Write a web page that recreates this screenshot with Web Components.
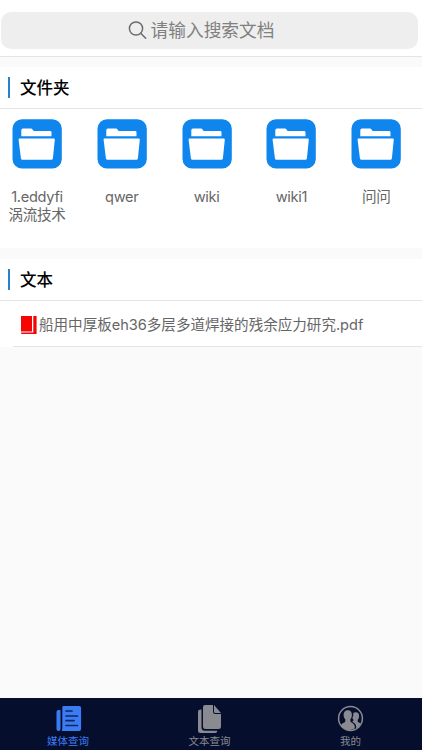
<!DOCTYPE html>
<html lang="zh-CN">
<head>
<meta charset="utf-8">
<meta name="viewport" content="width=device-width, initial-scale=1">
<title>媒体查询</title>
<style>
	html, body {
		height: 100%;
		margin: 0;
	}
	body {
		display: flex;
		flex-direction: column;
		background: #fafafa;
		color: #666;
		font-family: Inter, "Noto Sans CJK SC", sans-serif;
		overflow: hidden;
	}
	main {
		flex: 1;
		display: flex;
		flex-direction: column;
		gap: 11px;
	}
</style>
</head>
<body>
<search-bar placeholder="请输入搜索文档"></search-bar>
<main>
	<list-section heading="文件夹">
		<folder-grid>
			<folder-item>1.eddyfi<br>涡流技术</folder-item>
			<folder-item>qwer</folder-item>
			<folder-item>wiki</folder-item>
			<folder-item>wiki1</folder-item>
			<folder-item>问问</folder-item>
		</folder-grid>
	</list-section>
	<list-section heading="文本">
		<file-row>船用中厚板eh36多层多道焊接的残余应力研究.pdf</file-row>
	</list-section>
</main>
<tab-bar>
	<tab-item icon="media" active>媒体查询</tab-item>
	<tab-item icon="text">文本查询</tab-item>
	<tab-item icon="mine">我的</tab-item>
</tab-bar>

<script>
class SearchBar extends HTMLElement {
	constructor () {
		super();
		this.attachShadow({ mode: "open" });
		this.shadowRoot.innerHTML = `
			<style>
				:host {
					display: block;
					box-sizing: border-box;
					height: 57px;
					padding: 12px 4px 0 1px;
					background: white;
					border-bottom: 1px solid #e4e4e4;
				}
				#box {
					display: flex;
					align-items: center;
					justify-content: center;
					gap: 4px;
					height: 37px;
					padding-right: 17px;
					box-sizing: border-box;
					border-radius: 10px;
					background: #eee;
					color: #808080;
					font-size: 17.7px;
					line-height: 37px;
				}
				svg {
					flex: none;
				}
			</style>
			<div id="box">
				<svg width="19" height="19" viewBox="0 0 19 19" fill="none" stroke="#6c6c6c" stroke-width="1.5">
					<circle cx="8" cy="7.5" r="6.6"/>
					<path d="M12.7 12.2l5 5" stroke-linecap="round"/>
				</svg>
				<span></span>
			</div>
		`;
	}

	connectedCallback () {
		this.shadowRoot.querySelector("span").textContent = this.getAttribute("placeholder");
	}
}

class ListSection extends HTMLElement {
	constructor () {
		super();
		this.attachShadow({ mode: "open" });
		this.shadowRoot.innerHTML = `
			<style>
				:host {
					display: block;
					background: white;
				}
				:host(:first-child) {
					margin-top: 10px;
				}
				header {
					display: flex;
					align-items: center;
					gap: 10px;
					box-sizing: border-box;
					height: 42px;
					padding-left: 8px;
					border-bottom: 1px solid #e4e4e4;
				}
				header::before {
					content: "";
					width: 2px;
					height: 21px;
					background: #2583cc;
				}
				h2 {
					margin: 0;
					color: #000;
					font-size: 16.5px;
					font-weight: 500;
					line-height: 24px;
				}
			</style>
			<header><h2></h2></header>
			<slot></slot>
		`;
	}

	connectedCallback () {
		this.shadowRoot.querySelector("h2").textContent = this.getAttribute("heading");
	}
}

class FolderGrid extends HTMLElement {
	constructor () {
		super();
		this.attachShadow({ mode: "open" });
		this.shadowRoot.innerHTML = `
			<style>
				:host {
					display: grid;
					grid-template-columns: repeat(5, 74px);
					column-gap: 10.8px;
					box-sizing: border-box;
					height: 139px;
					padding-top: 10px;
				}
			</style>
			<slot></slot>
		`;
	}
}

class FolderItem extends HTMLElement {
	constructor () {
		super();
		this.attachShadow({ mode: "open" });
		this.shadowRoot.innerHTML = `
			<style>
				:host {
					display: flex;
					flex-direction: column;
					align-items: center;
					gap: 19px;
					font-size: 14.6px;
					letter-spacing: -.3px;
					line-height: 18px;
					text-align: center;
				}
				svg {
					flex: none;
				}
			</style>
			<svg width="50" height="50" viewBox="0 0 50 50">
				<rect x=".5" y=".2" width="49.3" height="49.3" rx="9.5" fill="#0f86ee"/>
				<g fill="white">
					<path d="M9.3 17.2v-6q0-1.6 1.6-1.6h8q1 0 1.6.9l1.1 1.6h16.6q1.3 0 1.3 1.3v3.8z"/>
					<path d="M7.6 19.4h34q1.3 0 1.2 1.3l-1.9 18.6q-.2 1.5-1.6 1.5H10.5q-1.4 0-1.6-1.5L6.6 20.7q-.2-1.3 1-1.3z"/>
				</g>
			</svg>
			<div><slot></slot></div>
		`;
	}
}

class FileRow extends HTMLElement {
	constructor () {
		super();
		this.attachShadow({ mode: "open" });
		this.shadowRoot.innerHTML = `
			<style>
				:host {
					display: flex;
					align-items: center;
					gap: 2px;
					box-sizing: border-box;
					height: 46px;
					margin-left: 13px;
					padding: 3px 0 0 8px;
					border-bottom: 1px solid #e4e4e4;
					font-size: 14.56px;
					line-height: 20px;
					white-space: nowrap;
				}
				svg {
					flex: none;
				}
			</style>
			<svg width="16" height="19" viewBox="0 0 16 19" fill="#f60505">
				<path d="M0 0h11v15.5H0z"/>
				<path d="M12.3 0h3.3v18H.9Q0 18 0 17.1v-.6h12.3z"/>
			</svg>
			<span><slot></slot></span>
		`;
	}
}

class TabBar extends HTMLElement {
	constructor () {
		super();
		this.attachShadow({ mode: "open" });
		this.shadowRoot.innerHTML = `
			<style>
				:host {
					display: grid;
					grid-template-columns: 136px 147px 135px;
					height: 52px;
					background: #060e2e;
				}
			</style>
			<slot></slot>
		`;
	}
}

const tabIcons = {
	media: `
		<path d="M8.6 1h15.5q2 0 2 2v21q0 2-2 2H6.6q.7-1 .7-3V2.300Q7.300 1 8.600 1z"/>
		<path d="M5.500 5h-2q-2 0-2 2v17q0 2 2 2t2-2z"/>
		<path d="M11 6h6M11 11h11.500M11 15.700h8M11 20.500h11.500" stroke="#10265f" stroke-width="1.700" stroke-linecap="round"/>
	`,
	text: `
		<path d="M4.500 4.500Q2 4.500 2 7v18.500Q2 28 4.500 28H19q2.300 0 2.300-2.300H9q-3.500 0-3.500-3.500V4.500z"/>
		<path d="M9 0h8v6.500Q17 9 19.500 9H25v12.500q0 2.500-2.500 2.500H9.500Q7 24 7 21.500V2q0-2 2-2z"/>
		<path d="M18 0l7 8h-5.500Q18 8 18 6.500z"/>
	`,
	mine: `
		<circle cx="13.500" cy="13.500" r="11.900" fill="none" stroke="currentColor" stroke-width="1.500"/>
		<path d="M10.800 5.200c3 0 4.300 2.100 4.100 5-.2 2.100-.8 3.200-1.500 4v2c0 1.300 3.700 1.600 4.300 4.800v2.600c-4.200 2.200-10.500 1.700-14-2.600.6-3 4.600-3.300 4.600-4.800v-2c-1-.8-1.600-2.200-1.700-4-.1-3 1.200-5 4.200-5z"/>
		<path d="M18.700 7.200c2.500 0 3.600 1.700 3.400 4.200-.1 1.700-.7 2.700-1.400 3.400v1.500c0 1 2.200 1.300 3.100 2.500-1 2.200-2.700 3.900-4.700 4.800v-2.500c0-2.600-3.200-3.800-3.800-4.700.7-.3 1.300-.7 1.300-1.300-.6-.5-1-1.200-1.200-2 1-2 1-3.500.8-5 .6-.6 1.500-.9 2.500-.9z"/>
	`
};

class TabItem extends HTMLElement {
	constructor () {
		super();
		this.attachShadow({ mode: "open" });
		this.shadowRoot.innerHTML = `
			<style>
				:host {
					display: flex;
					flex-direction: column;
					align-items: center;
					box-sizing: border-box;
					padding-top: 7px;
					color: #898b91;
					font-size: 10.5px;
					line-height: 15px;
				}
				:host([active]) {
					color: #3b7cf5;
				}
				svg {
					flex: none;
					overflow: visible;
				}
			</style>
			<svg width="27" height="29" viewBox="0 0 27 29" fill="currentColor"></svg>
			<span><slot></slot></span>
		`;
	}

	connectedCallback () {
		this.shadowRoot.querySelector("svg").innerHTML = tabIcons[this.getAttribute("icon")];
	}
}

customElements.define("search-bar", SearchBar);
customElements.define("list-section", ListSection);
customElements.define("folder-grid", FolderGrid);
customElements.define("folder-item", FolderItem);
customElements.define("file-row", FileRow);
customElements.define("tab-bar", TabBar);
customElements.define("tab-item", TabItem);
</script>
</body>
</html>
